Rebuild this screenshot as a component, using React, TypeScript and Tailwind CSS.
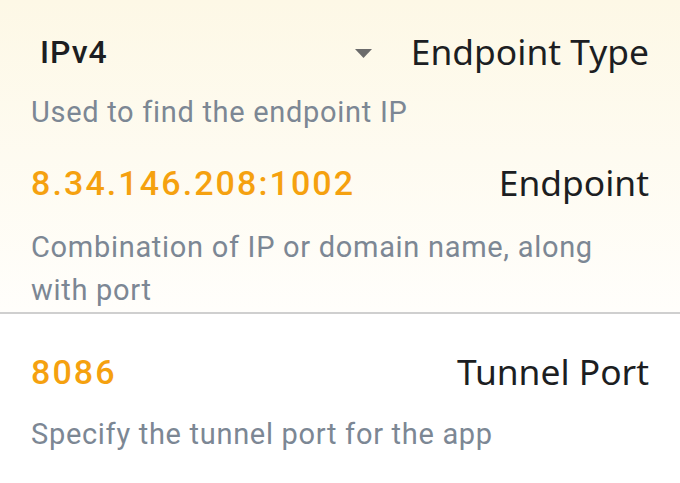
export default function App() {
  return (
    <div className="w-[680px] h-[483px] overflow-hidden bg-white font-['Roboto',sans-serif]">
      <div className="bg-gradient-to-b from-[#fdf8e6] to-[#fffefb] border-b-2 border-[#cfcfcf]">
        {/* endpoint type select */}
        <div className="px-[31px] pt-[21px]">
          <div className="flex items-center justify-between h-[62px]">
            <div className="flex items-center w-[343px] pl-[9px] pr-[2px] justify-between">
              <span className="text-[32px] font-medium tracking-[1px] text-[#1c1e22]">IPv4</span>
              <svg width="17" height="9" viewBox="0 0 17 9" className="mt-[2px]">
                <path d="M0 0 L17 0 L8.5 9 Z" fill="#6b6b6b" />
              </svg>
            </div>
            <span className="text-[35.4px] text-[#1c1e22] font-['Noto_Sans',sans-serif]">Endpoint Type</span>
          </div>
          <p className="text-[29px] tracking-[0.7px] leading-[43px] text-[#7c8794] mt-[8px]">Used to find the endpoint IP</p>
        </div>

        <div className="px-[31px] pt-[18px]">
          <div className="flex items-center justify-between h-[62px]">
            <span className="text-[34px] font-medium tracking-[2.1px] text-[#f5a10f]">8.34.146.208:1002</span>
            <span className="text-[35.4px] text-[#1c1e22] font-['Noto_Sans',sans-serif]">Endpoint</span>
          </div>
          <p className="text-[29px] tracking-[0.7px] leading-[43px] text-[#7c8794] pt-[12px] pr-[20px]">
            Combination of IP or domain name, along with port
          </p>
        </div>
      </div>

      <div className="px-[31px] pt-[27px]">
        <div className="flex items-center justify-between h-[62px]">
          <span className="text-[34px] font-medium tracking-[2.1px] text-[#f5a10f]">8086</span>
          <span className="text-[35.4px] text-[#1c1e22] font-['Noto_Sans',sans-serif]">Tunnel Port</span>
        </div>
        <p className="text-[29px] tracking-[0.7px] leading-[43px] text-[#7c8794] pt-[10px]">
          Specify the tunnel port for the app
        </p>
      </div>
    </div>
  );
}
